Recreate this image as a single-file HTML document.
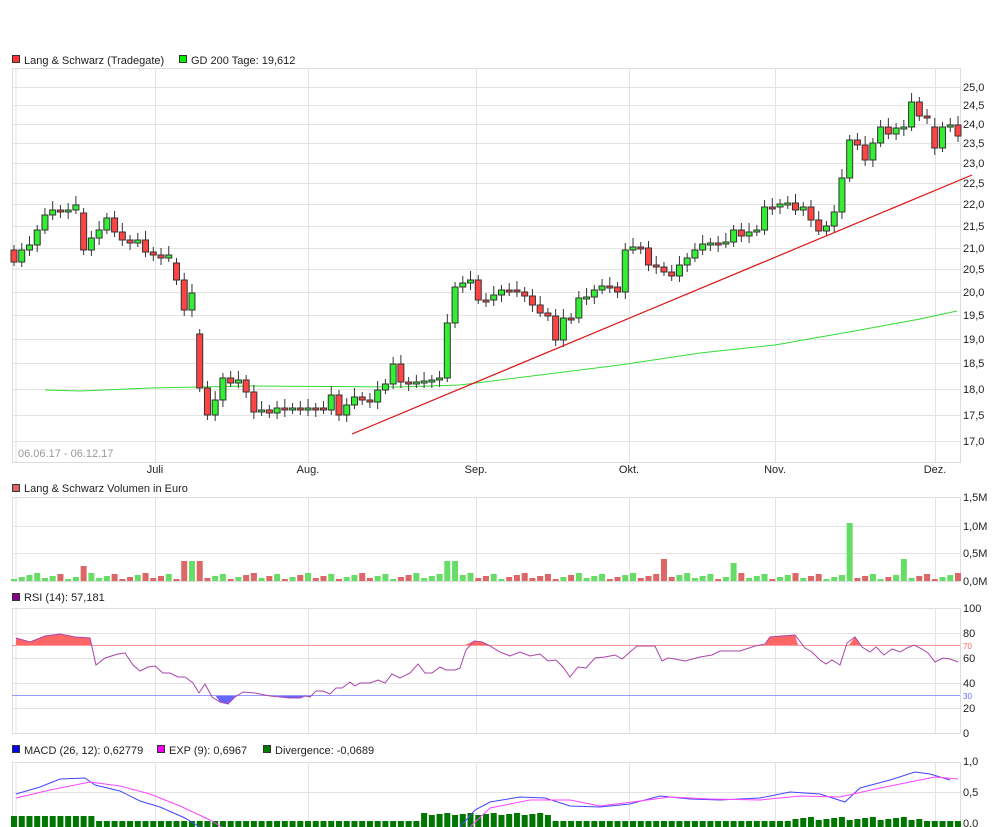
<!DOCTYPE html>
<html><head><meta charset="utf-8"><style>
body{margin:0;background:#fff;width:996px;height:827px;overflow:hidden;font-family:"Liberation Sans",sans-serif}
svg{position:absolute;left:0;top:0}
text{font-family:"Liberation Sans",sans-serif;font-size:11px;fill:#222}
</style></head><body>
<svg id="s" width="996" height="827" xmlns="http://www.w3.org/2000/svg"></svg>
<script>
(function(){
var s=document.getElementById('s'),h='';
function R(x,y,w,hh,f,st){h+='<rect x="'+x+'" y="'+y+'" width="'+w+'" height="'+hh+'" fill="'+f+'"'+(st?' stroke="'+st+'" stroke-width="1"':'')+'/>';}
function L(x1,y1,x2,y2,c,w){h+='<line x1="'+x1+'" y1="'+y1+'" x2="'+x2+'" y2="'+y2+'" stroke="'+c+'" stroke-width="'+(w||1)+'"/>';}
function T(x,y,t,a,c){h+='<text x="'+x+'" y="'+y+'"'+(a?' text-anchor="'+a+'"':'')+(c?' style="fill:'+c+'"':'')+'>'+t+'</text>';}
function P(pts,c,f){h+='<polyline points="'+pts.map(function(p){return p.join(',')}).join(' ')+'" fill="'+(f||'none')+'" stroke="'+c+'" stroke-width="1"/>';}
var vx=[155,308,476,629,775,935];
function panel(y1,y2,hs){R(12.5,y1+.5,948,y2-y1,'#fff','#ddd');L(16,y1,16,y2,'#e4e4e4');vx.forEach(function(x){L(x+.5,y1,x+.5,y2,'#e4e4e4')});hs.forEach(function(y){L(12,y+.5,960,y+.5,'#e4e4e4')});}
function leg(x,y,c,t){R(x+.5,y-8.5,7,7,c,'#333');T(x+12,y,t);}
leg(12,64,'#f33','Lang &amp; Schwarz (Tradegate)');leg(179,64,'#0e0','GD 200 Tage: 19,612');
var py=[[87,'25,0'],[105,'24,5'],[124,'24,0'],[143,'23,5'],[163,'23,0'],[183,'22,5'],[204,'22,0'],[226,'21,5'],[248,'21,0'],[269,'20,5'],[292,'20,0'],[315,'19,5'],[339,'19,0'],[363,'18,5'],[389,'18,0'],[415,'17,5'],[441,'17,0']];
panel(68,462,py.map(function(p){return p[0]}));
py.forEach(function(p){T(963,p[0]+4,p[1])});
[['Juli',155],['Aug.',308],['Sep.',476],['Okt.',629],['Nov.',775],['Dez.',935]].forEach(function(a){T(a[1],473,a[0],'middle')});
T(18,457,'06.06.17 - 06.12.17',null,'#999');
P([[45,390],[80,391],[150,388],[250,386],[400,387],[460,385],[540,375],[620,365],[700,353],[775,345],[860,330],[920,319],[957,311]],'#3d3');
var c=[262,250,245,230,215,210,211,210,205,250,238,230,218,232,240,243,240,252,255,258,255,280,310,293,388,415,400,378,383,380,392,412,410,413,408,410,408,410,408,408,410,395,415,405,397,400,402,390,384,364,382,383,382,381,380,378,323,287,283,280,300,300,295,290,290,292,296,305,313,316,340,318,318,298,297,290,286,287,292,250,247,248,265,267,272,276,265,258,250,244,243,244,242,230,236,232,230,207,207,204,203,210,207,220,231,226,212,178,140,145,160,143,127,134,128,127,102,116,118,148,127,125,136];
var n=c.length,dx=(958-14)/(n-1),o0=250;
for(var i=0;i<n;i++){var x=14+i*dx,o=i?c[i-1]:o0,cl=c[i];if(i==9)o=213;if(i==21)o=263;if(i==24)o=334;if(i==56)o=378;if(i==119)o=127;
var tp=Math.min(o,cl),bt=Math.max(o,cl),up=cl<o;if(bt-tp<2){bt=tp+2;}
L(x,tp-5-(i%3)*2,x,bt+4+(i%4),'#333');R(x-3,tp,6,bt-tp,up?'#3e3':'#f44','#333');}
L(352,434,972,175,'#d11',1.2);
R(12.5,484.5,7,7,'#d66','#333');T(24,492,'Lang &amp; Schwarz Volumen in Euro');
panel(497,581,[526,553]);
[[497,'1,5M'],[526,'1,0M'],[553,'0,5M'],[581,'0,0M']].forEach(function(p){T(963,p[0]+4,p[1])});
for(var i=0;i<n;i++){var x=14+i*dx,up=i?c[i]<c[i-1]:1;var v=2+((i*37)%7);if([22,23,24,57,56].indexOf(i)>=0)v=20;if(i==108)v=58;if(i==84||i==115)v=22;if(i==93)v=18;if(i==9)v=15;
R(x-3,581-v,6,v,up?'#6d6':'#d66');}
R(12.5,593.5,7,7,'#808','#333');T(24,601,'RSI (14): 57,181');
panel(608,733,[633,658,683,708]);
[[608,'100'],[633,'80'],[658,'60'],[683,'40'],[708,'20'],[733,'0']].forEach(function(p){T(963,p[0]+4,p[1])});
var rr=[[16,638],[30,642],[45,636],[60,634],[75,637],[90,638],[96,665],[105,658],[118,654],[125,653],[133,665],[140,671],[148,667],[155,666],[163,673],[170,673],[178,677],[185,677],[193,683],[199,693],[205,684],[212,697],[220,702],[228,704],[235,697],[243,692],[255,693],[270,696],[290,698],[300,698],[305,696],[310,697],[316,691],[323,691],[330,694],[336,688],[342,688],[350,682],[355,686],[360,683],[370,683],[378,680],[385,683],[392,674],[400,678],[410,673],[418,664],[425,673],[432,673],[440,667],[446,670],[455,670],[460,668],[466,650],[474,641],[482,642],[490,646],[500,652],[510,656],[520,652],[530,656],[540,654],[548,661],[556,660],[563,667],[570,677],[578,667],[586,668],[595,658],[605,657],[615,655],[622,659],[630,652],[637,646],[655,646],[662,661],[668,658],[675,659],[685,661],[700,657],[712,655],[720,651],[740,651],[755,646],[765,644],[770,637],[782,636],[795,635],[805,648],[812,652],[820,660],[826,664],[832,660],[840,665],[847,643],[855,637],[862,647],[870,652],[876,647],[884,655],[892,649],[900,652],[907,648],[914,645],[922,649],[928,653],[935,662],[943,658],[950,659],[958,662]];
h+='<path d="M16,645 L16,638 30,642 45,636 60,634 75,637 90,638 92,645Z" fill="#f66"/>';
h+='<path d="M465,645 L474,641 482,642 490,645Z" fill="#f66"/>';
h+='<path d="M765,645 L770,637 782,636 795,635 798,645Z" fill="#f66"/>';
h+='<path d="M849,645 L855,637 860,645Z" fill="#f66"/>';
h+='<path d="M215,695 L220,702 228,704 235,697 240,695Z" fill="#66f"/>';
h+='<path d="M270,695 L290,698 300,698 305,696 310,697 312,695Z" fill="#66f"/>';
L(12,645.5,960,645.5,'#f99');L(12,695.5,960,695.5,'#99f');
h+='<text x="963" y="649" style="font-size:8px;fill:#f66">70</text><text x="963" y="699" style="font-size:8px;fill:#66f">30</text>';
P(rr,'#a4a');
R(12.5,745.5,7,7,'#00e','#333');T(24,754,'MACD (26, 12): 0,62779');
R(157.5,745.5,7,7,'#e0e','#333');T(169,754,'EXP (9): 0,6967');
R(263.5,745.5,7,7,'#070','#333');T(275,754,'Divergence: -0,0689');
panel(762,840,[792]);
[[761,'1,0'],[792,'0,5'],[823,'0,0']].forEach(function(p){T(963,p[0]+4,p[1])});
for(var i=0;i<n;i++){var x=14+i*dx;var d=i<=10?7:(i>52&&i<70?8+(i%3):(i>100&&i<118?(i%4)+3:2));R(x-3,823-d,6,d+4,'#070');}
P([[16,794],[40,787],[60,779],[85,778],[95,785],[120,791],[140,801],[160,807],[185,818],[200,827]],'#44f');
P([[16,798],[50,790],[90,782],[120,786],[150,794],[180,806],[210,820],[222,827]],'#f4f');
P([[460,827],[475,810],[490,802],[520,797],[545,798],[570,806],[600,807],[630,804],[660,796],[690,799],[720,800],[760,798],[790,792],[820,794],[845,802],[860,788],[890,780],[915,772],[930,774],[950,780]],'#44f');
P([[470,827],[490,808],[530,800],[570,800],[600,806],[640,801],[670,797],[710,799],[760,800],[800,796],[840,797],[880,788],[910,782],[935,777],[958,779]],'#f4f');
s.innerHTML=h;
})();
</script>
</body></html>
